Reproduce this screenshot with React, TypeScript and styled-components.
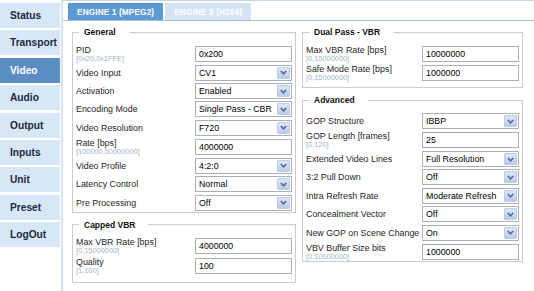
import React from 'react'
import styled, { createGlobalStyle } from 'styled-components'

const GlobalStyle = createGlobalStyle`
    body {
        margin: 0;
        background: #ffffff;
        font-family: "Liberation Sans", Arial, sans-serif;
    }
`

const Page = styled.div`
    display: flex;
    width: 534px;
    height: 291px;
    overflow: hidden;
    background: #fff;
`

const Sidebar = styled.nav`
    width: 60px;
    padding-top: 3px;
    padding-right: 1px;
    border-right: 2px solid #d3e1f1;
    display: grid;
    grid-auto-rows: 25px;
    row-gap: 2.4px;
    align-content: start;
`

const NavButton = styled.div<{ $active?: boolean }>`
    display: flex;
    align-items: center;
    padding-left: 10px;
    font-size: 10.2px;
    font-weight: bold;
    background: ${p => p.$active ? '#5b8dc4' : '#d8e7f8'};
    color: ${p => p.$active ? '#ffffff' : '#1b2a3b'};
`

const Content = styled.div`
    flex: 1;
    display: flex;
    flex-direction: column;
`

const TabBar = styled.div`
    height: 17px;
    padding: 2px 0 0 5px;
    border-top: 1px solid #c6d5e6;
    border-bottom: 1px solid #a7bfdc;
    display: flex;
    align-items: flex-end;
    gap: 2px;
`

const Tab = styled.div<{ $active?: boolean }>`
    height: 17px;
    padding: 0 9px;
    display: flex;
    align-items: center;
    font-size: 8.3px;
    font-weight: bold;
    letter-spacing: 0.1px;
    text-transform: uppercase;
    color: #ffffff;
    background: ${p => p.$active ? '#5d9ad4' : '#d5e4f5'};
`

const Panel = styled.div`
    display: grid;
    grid-template-columns: 224px 221px;
    column-gap: 6px;
    padding: 6px 11px 0 9px;
    align-items: start;
`

const Column = styled.div`
    display: flex;
    flex-direction: column;
    gap: 7px;
`

const Group = styled.fieldset<{ $padBottom: number }>`
    margin: 0;
    min-width: 0;
    border: 1px solid #c8ccd2;
    padding: 7px 3px ${p => p.$padBottom}px 3px;
`

const Legend = styled.legend`
    margin-left: 3px;
    padding: 0 13px 0 5px;
    font-size: 8.5px;
    line-height: 10px;
    font-weight: bold;
    color: #111;
`

const Row = styled.div<{ $hint: boolean }>`
    height: ${p => p.$hint ? 19.5 : 18.4}px;
    display: grid;
    grid-template-columns: 1fr 97px;
    align-items: center;
`

const LabelBlock = styled.div`
    display: flex;
    flex-direction: column;
    white-space: nowrap;
`

const Label = styled.span`
    font-size: 8.9px;
    line-height: 10px;
    color: #1e1e1e;
`

const Hint = styled.span`
    font-size: 7.4px;
    line-height: 8px;
    color: #a0b4cc;
`

const TextBox = styled.div`
    height: 14px;
    border: 1px solid #a9b0b8;
    background: #fff;
    display: flex;
    align-items: center;
    padding: 0 3px;
    font-size: 8.8px;
    color: #000;
`

const SelectBox = styled.div`
    height: 14px;
    border: 1px solid #a9b0b8;
    background: #fff;
    display: flex;
    align-items: center;
    font-size: 8.8px;
    color: #000;
`

const SelectValue = styled.span`
    flex: 1;
    padding-left: 3px;
    white-space: nowrap;
    overflow: hidden;
`

const Arrow = styled.span`
    width: 11px;
    height: 10px;
    margin-right: 1px;
    border: 1px solid #bccbe6;
    border-radius: 1px;
    background: linear-gradient(#dde7f7, #b9cbeb);
    display: flex;
    align-items: center;
    justify-content: center;
`

type Field = { label: string, hint?: string, kind: 'input' | 'select', value: string }

const general: Field[] = [
    { label: 'PID', hint: '[0x20,0x1FFE]', kind: 'input', value: '0x200' },
    { label: 'Video Input', kind: 'select', value: 'CV1' },
    { label: 'Activation', kind: 'select', value: 'Enabled' },
    { label: 'Encoding Mode', kind: 'select', value: 'Single Pass - CBR' },
    { label: 'Video Resolution', kind: 'select', value: 'F720' },
    { label: 'Rate [bps]', hint: '[100000,50000000]', kind: 'input', value: '4000000' },
    { label: 'Video Profile', kind: 'select', value: '4:2:0' },
    { label: 'Latency Control', kind: 'select', value: 'Normal' },
    { label: 'Pre Processing', kind: 'select', value: 'Off' },
]

const capped: Field[] = [
    { label: 'Max VBR Rate [bps]', hint: '[0,15000000]', kind: 'input', value: '4000000' },
    { label: 'Quality', hint: '[1,100]', kind: 'input', value: '100' },
]

const dualPass: Field[] = [
    { label: 'Max VBR Rate [bps]', hint: '[0,15000000]', kind: 'input', value: '10000000' },
    { label: 'Safe Mode Rate [bps]', hint: '[0,15000000]', kind: 'input', value: '1000000' },
]

const advanced: Field[] = [
    { label: 'GOP Structure', kind: 'select', value: 'IBBP' },
    { label: 'GOP Length [frames]', hint: '[0,120]', kind: 'input', value: '25' },
    { label: 'Extended Video Lines', kind: 'select', value: 'Full Resolution' },
    { label: '3:2 Pull Down', kind: 'select', value: 'Off' },
    { label: 'Intra Refresh Rate', kind: 'select', value: 'Moderate Refresh' },
    { label: 'Concealment Vector', kind: 'select', value: 'Off' },
    { label: 'New GOP on Scene Change', kind: 'select', value: 'On' },
    { label: 'VBV Buffer Size bits', hint: '[0,10000000]', kind: 'input', value: '1000000' },
]

const menu = ['Status', 'Transport', 'Video', 'Audio', 'Output', 'Inputs', 'Unit', 'Preset', 'LogOut']

const Chevron = () => (
    <svg width="7" height="5" viewBox="0 0 7 5">
        <path d="M0.8 1 L3.5 3.8 L6.2 1" fill="none" stroke="#4a6797" strokeWidth="1.5" />
    </svg>
)

const FieldGroup = ({ title, fields, padBottom }: { title: string, fields: Field[], padBottom: number }) => (
    <Group $padBottom={padBottom}>
        <Legend>{title}</Legend>
        {fields.map(f => (
            <Row key={f.label} $hint={!!f.hint}>
                <LabelBlock>
                    <Label>{f.label}</Label>
                    {f.hint && <Hint>{f.hint}</Hint>}
                </LabelBlock>
                {f.kind === 'input'
                    ? <TextBox>{f.value}</TextBox>
                    : (
                        <SelectBox>
                            <SelectValue>{f.value}</SelectValue>
                            <Arrow><Chevron /></Arrow>
                        </SelectBox>
                    )}
            </Row>
        ))}
    </Group>
)

export default () => {
    return (
        <Page>
            <GlobalStyle />
            <Sidebar>
                {menu.map(m => (
                    <NavButton key={m} $active={m === 'Video'}>{m}</NavButton>
                ))}
            </Sidebar>
            <Content>
                <TabBar>
                    <Tab $active>Engine 1 (MPEG2)</Tab>
                    <Tab>Engine 2 (H264)</Tab>
                </TabBar>
                <Panel>
                    <Column>
                        <FieldGroup title="General" fields={general} padBottom={0} />
                        <FieldGroup title="Capped VBR" fields={capped} padBottom={6} />
                    </Column>
                    <Column>
                        <FieldGroup title="Dual Pass - VBR" fields={dualPass} padBottom={4} />
                        <FieldGroup title="Advanced" fields={advanced} padBottom={0} />
                    </Column>
                </Panel>
            </Content>
        </Page>
    )
}
